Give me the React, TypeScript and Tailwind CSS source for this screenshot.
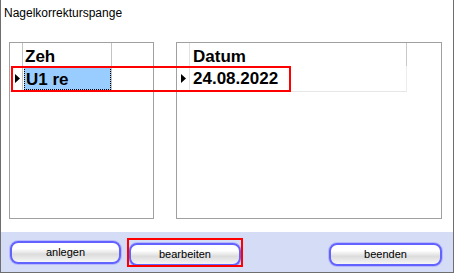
import React from 'react';

function RowMarker() {
  return (
    <svg width="5" height="9" viewBox="0 0 5 9" className="block">
      <path d="M0 0 L5 4.5 L0 9 Z" fill="#000" />
    </svg>
  );
}

function PillButton({ label, width }: { label: string; width: string }) {
  return (
    <button
      className={`${width} h-[23px] rounded-[8px] border-2 border-[#6262ff] bg-linear-to-b from-white from-30% via-[#dcdcdc] via-60% to-[#f6f6f6] text-[11px] leading-[19px] text-black shadow-[0_0_0_1px_#b8b8ff]`}
    >
      {label}
    </button>
  );
}

export default function App() {
  const rows = [{ zeh: 'U1 re', datum: '24.08.2022' }];

  return (
    <div className="relative w-[454px] h-[273px] bg-white border-l border-r border-b border-[#6e6e6e] flex flex-col font-['Liberation_Sans',Arial,sans-serif] text-black">
      <div className="pl-[3px] pt-[6px] text-[12px] leading-[14px]">Nagelkorrekturspange</div>

      <div className="flex-1 flex items-start pl-[8px] pt-[22px] gap-[22px]">
        {/* left grid */}
        <div className="w-[145px] h-[177px] border border-[#a0a0a0] overflow-hidden">
          <div className="flex h-[23px] text-[17px] font-bold leading-[17px]">
            <div className="w-[13px] border-r border-[#c4c4c4]" />
            <div className="w-[89px] border-r border-[#c4c4c4] pl-[2px] pt-[5px]">Zeh</div>
            <div className="flex-1" />
          </div>
          {rows.map((r) => (
            <div key={r.zeh} className="flex h-[26px] border-b border-[#e6e6e6] text-[17px] font-bold leading-[17px]">
              <div className="w-[13px] border-r border-[#c4c4c4] flex items-center pl-[5px]">
                <RowMarker />
              </div>
              <div className="w-[89px] border-r border-[#c4c4c4] pl-[1px] pt-[1px]">
                <div className="w-[87px] h-[23px] bg-[#99ccff] border border-dotted border-black pl-[1px] pt-[3px]">
                  {r.zeh}
                </div>
              </div>
              <div className="flex-1" />
            </div>
          ))}
        </div>

        {/* right grid */}
        <div className="w-[266px] h-[177px] border border-[#a0a0a0]">
          <div className="w-[230px]">
            <div className="flex h-[23px] text-[17px] font-bold leading-[17px]">
              <div className="w-[13px] border-r border-[#e2e2e2]" />
              <div className="w-[217px] border-r border-[#c8c8c8] pl-[3px] pt-[5px]">Datum</div>
            </div>
            {rows.map((r) => (
              <div key={r.datum} className="flex h-[26px] border-b border-[#e6e6e6] text-[17px] font-bold leading-[17px]">
                <div className="w-[13px] border-r border-[#e2e2e2] flex items-center pl-[4px]">
                  <RowMarker />
                </div>
                <div className="w-[217px] border-r border-[#ececec] pl-[3px] pt-[4px]">{r.datum}</div>
              </div>
            ))}
          </div>
        </div>
      </div>

      <div className="h-[40px] bg-[#d4ddf5] flex items-start pt-[9px] pl-[9px] pr-[11px]">
        <PillButton label="anlegen" width="w-[111px]" />
        <div className="ml-[8px]">
          <PillButton label="bearbeiten" width="w-[112px]" />
        </div>
        <div className="ml-auto">
          <PillButton label="beenden" width="w-[113px]" />
        </div>
      </div>

      {/* red highlight overlays */}
      <div className="absolute left-[10px] top-[66px] w-[280px] h-[26px] border-2 border-[#ff0000] pointer-events-none" />
      <div className="absolute left-[126px] top-[238px] w-[116px] h-[29px] border-2 border-[#ff0000] pointer-events-none" />
    </div>
  );
}
